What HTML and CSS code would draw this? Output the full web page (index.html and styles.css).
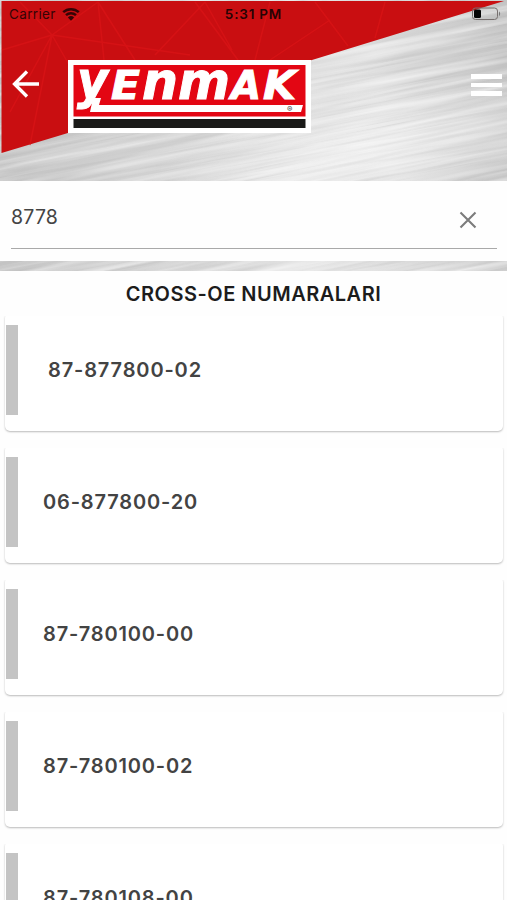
FILE: index.html
```
<!DOCTYPE html>
<html lang="tr">
  <head>
    <meta charset="UTF-8" />
    <meta name="viewport" content="width=device-width, initial-scale=1.0" />
    <title>Yenmak</title>
    <link rel="stylesheet" href="styles.css">
  </head>
  <body>
    <div class="top">
      <!-- Brushed metal and red corner -->
      <svg class="topBackground" viewBox="0 0 507 271" preserveAspectRatio="none">
        <defs>
          <linearGradient id="metal" gradientUnits="userSpaceOnUse" x1="0" y1="150" x2="507" y2="70">
            <stop offset="0" stop-color="#c6c6c6" />
            <stop offset="0.3" stop-color="#d3d3d3" />
            <stop offset="0.55" stop-color="#e0e0e0" />
            <stop offset="0.75" stop-color="#dedede" />
            <stop offset="0.9" stop-color="#cfcfcf" />
            <stop offset="1" stop-color="#c4c4c4" />
          </linearGradient>
          <radialGradient id="shine" gradientUnits="userSpaceOnUse" cx="0" cy="0" r="1" gradientTransform="translate(370 150) rotate(-11) scale(230 60)">
            <stop offset="0" stop-color="#fff" stop-opacity="0.6" />
            <stop offset="1" stop-color="#fff" stop-opacity="0" />
          </radialGradient>
          <filter id="brush" x="0" y="0" width="100%" height="100%">
            <feTurbulence type="fractalNoise" baseFrequency="0.008 0.35" numOctaves="3" seed="4" />
            <feColorMatrix values="0 0 0 0 0.4  0 0 0 0 0.4  0 0 0 0 0.4  0.6 0 0 0 -0.25" />
          </filter>
          <filter id="brushLight" x="0" y="0" width="100%" height="100%">
            <feTurbulence type="fractalNoise" baseFrequency="0.006 0.16" numOctaves="3" seed="11" />
            <feColorMatrix values="0 0 0 0 1  0 0 0 0 1  0 0 0 0 1  1.1 0 0 0 -0.42" />
          </filter>
        </defs>
        <rect width="507" height="271" fill="url(#metal)" />
        <rect width="507" height="271" fill="url(#shine)" />
        <g transform="rotate(-11 253 135)">
          <rect x="-60" y="-90" width="640" height="450" filter="url(#brush)" />
          <rect x="-60" y="-90" width="640" height="450" filter="url(#brushLight)" />
        </g>
        <path d="M1.5 1H504L312 60L68 133L1.5 153Z" fill="#c90e11" />
        <g fill="none" stroke="#de1518" stroke-width="1.5" opacity="0.6">
          <path d="M52 35L2 50M52 35L10 112M52 35L30 145M52 35L72 70M52 35L190 55M52 35L98 2M52 35L20 2" />
          <path d="M98 2L104 60M98 2L135 60M155 55L205 2M195 2L238 60M205 2L232 50M270 2L255 60M315 2L348 46M330 20L270 60M385 2L375 38" />
        </g>
      </svg>

      <div class="topContent">
        <div class="statusBar">
          <div class="carrier">
            <span>Carrier</span>
            <svg width="18" height="14" viewBox="0 0 18 14">
              <path d="M1.2 5.2A11.5 11.5 0 0 1 16.8 5.2M4 8.1A7.4 7.4 0 0 1 14 8.1" fill="none" stroke="#350405" stroke-width="2.5" />
              <path d="M9 13.7L5.9 10.4A4.5 4.5 0 0 1 12.1 10.4Z" fill="#350405" />
            </svg>
          </div>
          <span class="time">5:31 PM</span>
          <svg class="battery" width="31" height="14" viewBox="0 0 31 14">
            <rect x="1.5" y="1" width="25" height="11.5" rx="3" fill="none" stroke="#77706f" />
            <rect x="3" y="2.5" width="7" height="8.5" rx="1.5" fill="#050505" />
            <path d="M28 4.3Q30.4 6.7 28 9.2Z" fill="#777" />
          </svg>
        </div>

        <div class="header">
          <svg class="back" width="28" height="28" viewBox="0 0 28 28">
            <path d="M15 1.5L2.5 14L15 26.5M2.5 14H27" fill="none" stroke="#fff" stroke-width="3.3" />
          </svg>
          <svg class="logo" width="243" height="73" viewBox="0 0 243 73">
            <rect width="243" height="73" fill="#fff" />
            <rect x="5.5" y="5" width="232" height="51.5" fill="#e30613" />
            <rect x="5.5" y="59" width="232" height="9" fill="#1a1a18" />
            <path d="M26 45H235L233 52H22L25 38H33L31 45Z" fill="#fff" />
            <g class="logoText">
              <text x="9" y="38" font-size="51" textLength="31" lengthAdjust="spacingAndGlyphs">y</text>
              <text x="43" y="38.5" font-size="39" textLength="29" lengthAdjust="spacingAndGlyphs">E</text>
              <text x="74" y="38.5" font-size="51" textLength="36" lengthAdjust="spacingAndGlyphs">n</text>
              <text x="110" y="38.5" font-size="51" textLength="52" lengthAdjust="spacingAndGlyphs">m</text>
              <text x="163" y="38.5" font-size="39" textLength="30" lengthAdjust="spacingAndGlyphs">A</text>
              <text x="195" y="38.5" font-size="39" textLength="33" lengthAdjust="spacingAndGlyphs">K</text>
            </g>
            <text class="registered" x="219" y="51.5">®</text>
          </svg>
          <div class="menu">
            <i></i>
            <i></i>
            <i></i>
          </div>
        </div>

        <div class="search">
          <div class="searchField">
            <span>8778</span>
            <svg width="18" height="18" viewBox="0 0 18 18">
              <path d="M1.5 1.5L16.5 16.5M16.5 1.5L1.5 16.5" fill="none" stroke="#7c7c7c" stroke-width="2.1" />
            </svg>
          </div>
        </div>
      </div>
    </div>

    <h2>CROSS-OE NUMARALARI</h2>

    <div class="list">
      <div class="card first"><span>87-877800-02</span></div>
      <div class="card"><span>06-877800-20</span></div>
      <div class="card"><span>87-780100-00</span></div>
      <div class="card"><span>87-780100-02</span></div>
      <div class="card last"><span>87-780108-00</span></div>
    </div>
  </body>
</html>
```

FILE: styles.css
```
body {
  height: 900px;
  margin: 0;
  overflow: hidden;
  background-color: #fefefe;
  font-family: "Inter", sans-serif;
}
svg {
  display: block;
}

.top {
  display: grid;
  height: 271px;
}
.topBackground,
.topContent {
  grid-area: 1 / 1;
  width: 507px;
  height: 271px;
}
.topContent {
  position: relative;
}

.statusBar {
  display: grid;
  grid-template-columns: 1fr auto 1fr;
  align-items: center;
  height: 28px;
  padding: 0 5px 0 9px;
  box-sizing: border-box;
  font-size: 13.5px;
  color: #350405;
}
.carrier {
  display: flex;
  align-items: center;
  gap: 6px;
  letter-spacing: 0.35px;
}
.time {
  margin-right: 4px;
  font-weight: 600;
  letter-spacing: 0.8px;
  color: #250304;
}
.battery {
  justify-self: end;
}

.header {
  display: flex;
  align-items: flex-start;
  height: 153px;
  padding: 32px 5px 0 12px;
  box-sizing: border-box;
}
.back {
  margin-top: 10px;
}
.logo {
  margin-left: 28px;
  overflow: visible;
}
.logoText {
  font-family: "DejaVu Sans", sans-serif;
  font-weight: bold;
  font-style: italic;
  fill: #fff;
  stroke: #fff;
  stroke-width: 1px;
}
.registered {
  font-size: 8px;
  fill: #444;
}
.menu {
  display: flex;
  flex-direction: column;
  gap: 4px;
  width: 31px;
  margin: 14px 0 0 auto;
}
.menu i {
  height: 4.5px;
  background-color: #fff;
}

.search {
  height: 80px;
  padding: 0 10px 0 11px;
  background-color: #fefefe;
  box-sizing: border-box;
}
.searchField {
  display: flex;
  justify-content: space-between;
  align-items: center;
  height: 68px;
  padding: 10px 20px 0 0;
  border-bottom: 1.5px solid #a9a9a9;
  box-sizing: border-box;
}
.searchField span {
  margin-top: -6px;
  font-size: 19.5px;
  letter-spacing: 0.2px;
  color: #444;
}

h2 {
  height: 46px;
  margin: 0;
  font-size: 20px;
  font-weight: 600;
  line-height: 46px;
  text-align: center;
  letter-spacing: 0.5px;
  color: #1c1c1c;
}

.list {
  display: flex;
  flex-direction: column;
  gap: 14px;
  padding: 0 4px 0 5px;
  margin-top: -4px;
}
.card {
  display: flex;
  align-items: center;
  flex-shrink: 0;
  height: 118px;
  padding-bottom: 4px;
  border-radius: 5px;
  background-color: #fff;
  box-shadow: 0 1px 2px rgba(0, 0, 0, 0.27);
  box-sizing: border-box;
  clip-path: inset(3px -3px -4px -3px);
}
.card::before {
  content: "";
  width: 12px;
  height: 90px;
  margin-left: 1px;
  background-color: #c4c4c4;
}
.card span {
  margin-left: 25px;
  font-size: 20px;
  font-weight: 600;
  letter-spacing: 0.85px;
  color: #434343;
}
.card.first span {
  margin-left: 30px;
}
/* the list goes on under the bottom edge of the screen */
.card.last {
  height: 59px;
  padding: 12px 0 0;
  align-items: flex-start;
  border-radius: 5px 5px 0 0;
}
.card.last::before {
  height: 47px;
}
.card.last span {
  margin-top: 33px;
}
```
